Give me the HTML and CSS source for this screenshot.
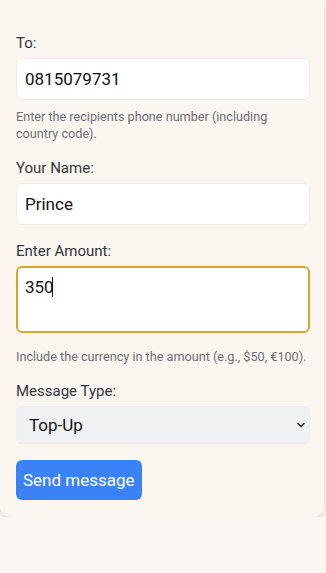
FILE: index.html
```html
<!DOCTYPE html>
<html lang="en">
<head>
<meta charset="UTF-8" />
<meta name="viewport" content="width=device-width, initial-scale=1" />
<title>Send Message</title>
<link rel="stylesheet" href="styles.css">
</head>
<body>
<form class="card">
  <div class="field">
    <label for="to">To:</label>
    <input type="text" id="to" value="0815079731" />
    <p class="hint">Enter the recipients phone number (including country code).</p>
  </div>

  <div class="field">
    <label for="name">Your Name:</label>
    <input type="text" id="name" value="Prince" />
  </div>

  <div class="field">
    <label for="amount">Enter Amount:</label>
    <div class="amount-box">
      <textarea id="amount" class="active" rows="2">350</textarea>
      <span class="caret"></span>
    </div>
    <p class="hint hint-wide">Include the currency in the amount (e.g., $50, €100).</p>
  </div>

  <div class="field">
    <label for="type">Message Type:</label>
    <div class="select-wrap">
      <select id="type">
        <option>Top-Up</option>
        <option>Reminder</option>
      </select>
      <svg class="chevron" width="10" height="10" viewBox="0 0 10 10">
        <path d="M2 3.5 L5 6.5 L8 3.5" fill="none" stroke="#222" stroke-width="1.4" stroke-linecap="round" stroke-linejoin="round" />
      </svg>
    </div>
  </div>

  <button type="button">Send message</button>
</form>
</body>
</html>
```

FILE: styles.css
```css
body {
  margin: 0;
  background-color: #faf7f2;
  font-family: Roboto, "Noto Sans", Arial, sans-serif;
}
.card {
  background-color: #fbf6ef;
  margin-right: 2px;
  padding: 33px 14px 17px 16px;
  border-radius: 0 0 10px 10px;
  box-shadow: 0 2px 5px rgba(0, 0, 0, 0.13);
}
.field {
  margin-bottom: 16px;
}
label {
  display: block;
  font-size: 15px;
  line-height: 20px;
  color: #313741;
  margin-bottom: 5px;
}
input,
textarea,
select {
  display: block;
  box-sizing: border-box;
  width: 100%;
  font-family: inherit;
  font-size: 17px;
  color: #111;
  margin: 0;
  outline: none;
}
input {
  height: 42px;
  padding: 0 8px;
  background: #fff;
  border: 1px solid #f0ece6;
  border-radius: 6px;
}
textarea {
  height: 67px;
  padding: 9px 7px;
  line-height: 20px;
  background: #fff;
  border: 2px solid #d4a72c;
  border-radius: 6px;
  resize: none;
}
.amount-box {
  position: relative;
}
.caret {
  position: absolute;
  left: 36px;
  top: 11px;
  width: 1px;
  height: 20px;
  background: #111;
}
.hint {
  margin: 8px 0 0 0;
  font-size: 12.65px;
  line-height: 17px;
  color: #6c6f76;
}
.hint-wide {
  margin-top: 15px;
}
.select-wrap {
  position: relative;
}
select {
  appearance: none;
  -webkit-appearance: none;
  height: 38px;
  padding: 0 12px;
  background: #eef0f2;
  border: 1px solid #eceef0;
  border-radius: 5px;
}
.chevron {
  position: absolute;
  right: 4px;
  top: 14px;
  pointer-events: none;
}
button {
  display: block;
  height: 40px;
  padding: 0 7px;
  background-color: #3b82f6;
  color: #fff;
  border: none;
  border-radius: 6px;
  font-family: inherit;
  font-size: 17px;
}
```
